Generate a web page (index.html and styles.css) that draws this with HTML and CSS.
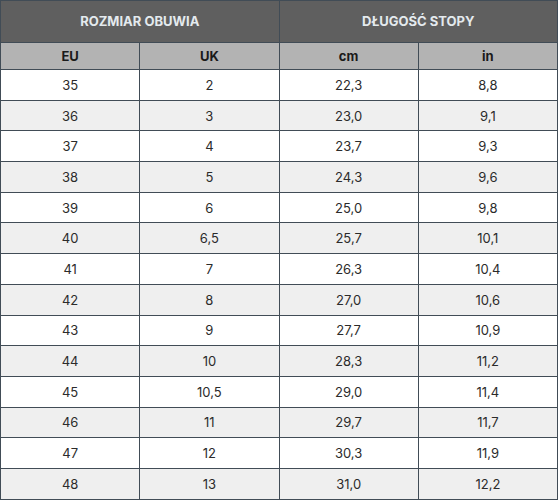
FILE: index.html
```html
<!DOCTYPE html>
<html lang="pl">
<head>
<meta charset="utf-8">
<link rel="stylesheet" href="styles.css">
</head>
<body>
<table class="sizes">
  <colgroup><col><col><col><col></colgroup>
  <thead>
    <tr class="group"><th colspan="2">ROZMIAR OBUWIA</th><th colspan="2">DŁUGOŚĆ STOPY</th></tr>
    <tr class="units"><th>EU</th><th>UK</th><th>cm</th><th>in</th></tr>
  </thead>
  <tbody>
    <tr><td>35</td><td>2</td><td>22,3</td><td>8,8</td></tr>
    <tr><td>36</td><td>3</td><td>23,0</td><td>9,1</td></tr>
    <tr><td>37</td><td>4</td><td>23,7</td><td>9,3</td></tr>
    <tr><td>38</td><td>5</td><td>24,3</td><td>9,6</td></tr>
    <tr><td>39</td><td>6</td><td>25,0</td><td>9,8</td></tr>
    <tr><td>40</td><td>6,5</td><td>25,7</td><td>10,1</td></tr>
    <tr><td>41</td><td>7</td><td>26,3</td><td>10,4</td></tr>
    <tr><td>42</td><td>8</td><td>27,0</td><td>10,6</td></tr>
    <tr><td>43</td><td>9</td><td>27,7</td><td>10,9</td></tr>
    <tr><td>44</td><td>10</td><td>28,3</td><td>11,2</td></tr>
    <tr><td>45</td><td>10,5</td><td>29,0</td><td>11,4</td></tr>
    <tr><td>46</td><td>11</td><td>29,7</td><td>11,7</td></tr>
    <tr><td>47</td><td>12</td><td>30,3</td><td>11,9</td></tr>
    <tr><td>48</td><td>13</td><td>31,0</td><td>12,2</td></tr>
  </tbody>
</table>
</body>
</html>
```
FILE: styles.css
```css
html, body {
  margin: 0;
  padding: 0;
  background: #ffffff;
}
.sizes {
  width: 558px;
  border-collapse: collapse;
  table-layout: fixed;
  font-family: Inter, "Liberation Sans", sans-serif;
  font-size: 13px;
  color: #2b2b2b;
}
.sizes th,
.sizes td {
  border: 1.5px solid #414c56;
  text-align: center;
  padding: 0;
}
.sizes .group th {
  height: 40.5px;
  background: #5f5f5f;
  color: #e4eaee;
  font-weight: 700;
  font-size: 13px;
}
.sizes .units th {
  height: 26.5px;
  background: #b3b3b3;
  color: #1a1a1a;
  font-weight: 700;
}
.sizes td {
  height: 29.7px;
  background: #ffffff;
}
.sizes tbody tr:nth-child(even) td {
  background: #efefef;
}
```
